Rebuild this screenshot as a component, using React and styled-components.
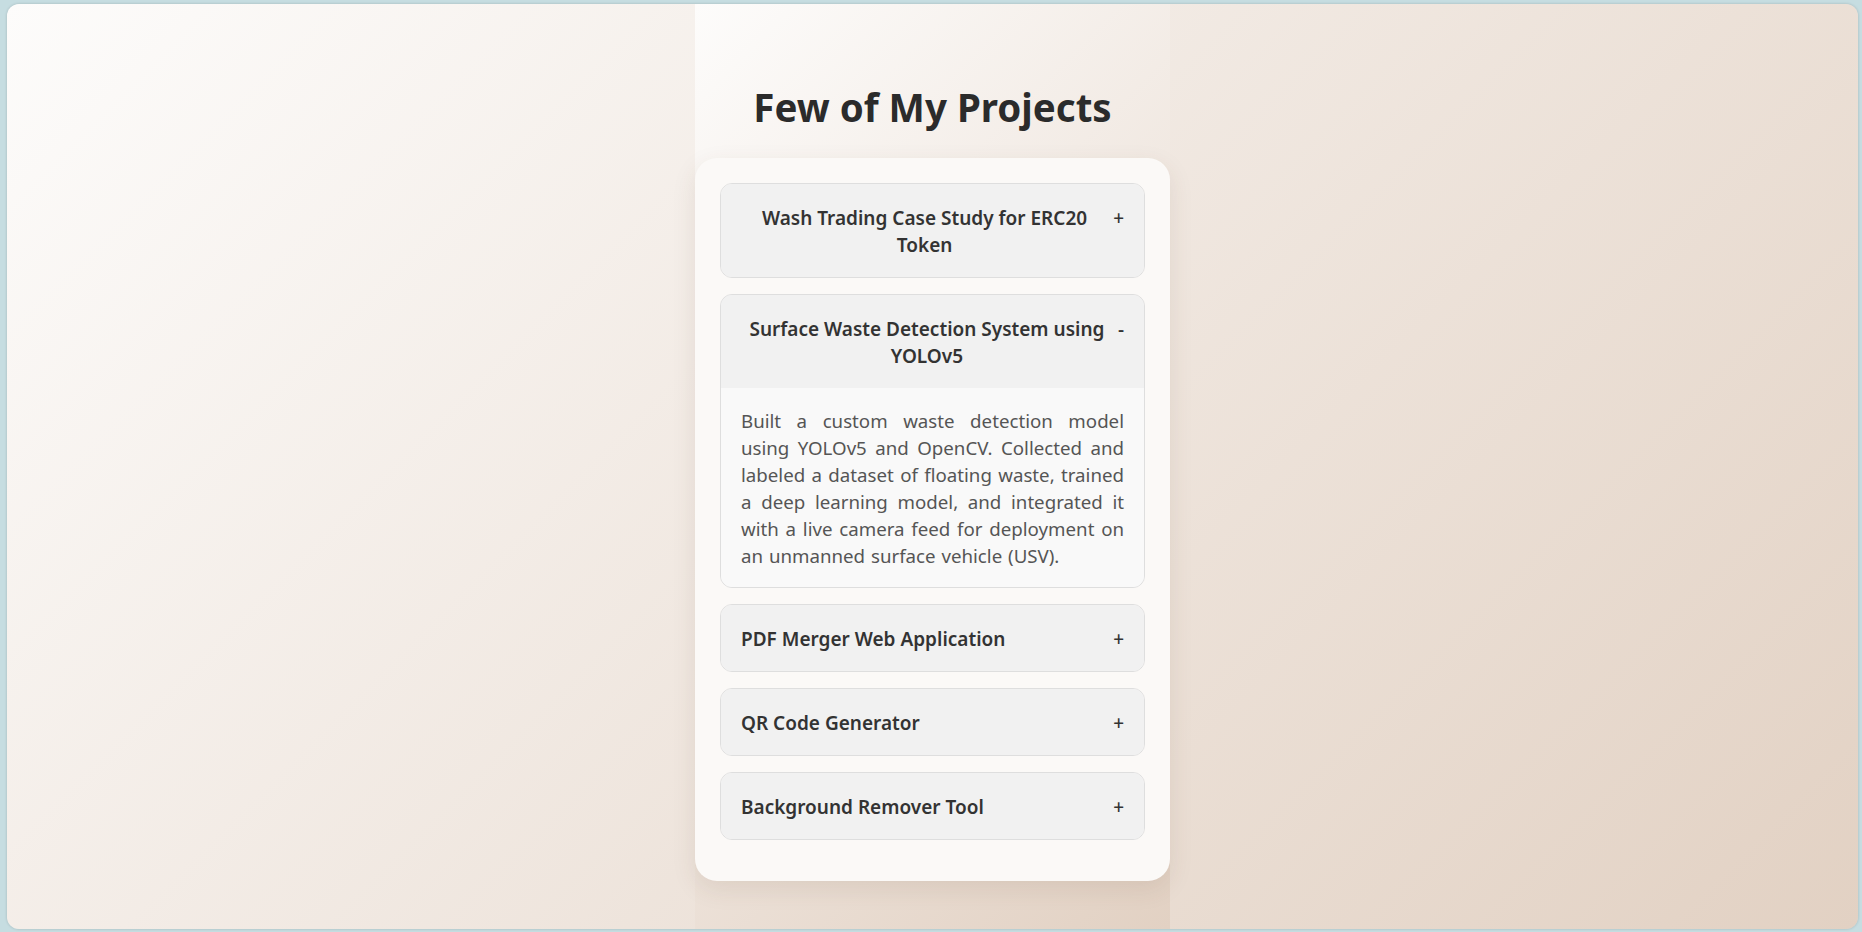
import React, { useState } from 'react';
import styled, { createGlobalStyle } from 'styled-components';

const GlobalStyle = createGlobalStyle`
  html, body {
    margin: 0;
    padding: 0;
    background: #c6dde1;
    font-family: "Noto Sans", "Open Sans", sans-serif;
  }
`;

const Frame = styled.div`
  margin: 4px 4px 3px 7px;
  height: 925px;
  border-radius: 12px;
  overflow: hidden;
  display: flex;
  justify-content: center;
  background: linear-gradient(135deg, #fdfcfb 0%, #e2d1c3 100%);
  box-shadow: 0 0 3px rgba(0, 0, 0, 0.18);
`;

const Section = styled.section`
  width: 475px;
  box-sizing: border-box;
  padding-top: 73px;
  background: linear-gradient(135deg, #fdfcfb 0%, #e2d1c3 100%);
`;

const Heading = styled.h2`
  margin: 0 0 21px;
  text-align: center;
  font-size: 38.5px;
  line-height: 60px;
  font-weight: 700;
  color: #2b2b2b;
`;

const Card = styled.div`
  background: #fbf9f7;
  border-radius: 22px;
  padding: 25px;
  box-shadow: 0 8px 24px rgba(90, 60, 40, 0.1);
`;

const Item = styled.div`
  border: 1px solid #dedede;
  border-radius: 12px;
  overflow: hidden;
  margin-bottom: 16px;
  background: #f1f1f1;
`;

const Header = styled.button`
  width: 100%;
  display: flex;
  justify-content: space-between;
  align-items: flex-start;
  gap: 5px;
  padding: 21px 20px 18px;
  border: none;
  background: #f1f1f1;
  font-family: inherit;
  font-size: 19px;
  line-height: 27px;
  font-weight: 600;
  color: #333;
  text-align: center;
  cursor: pointer;
`;

const Toggle = styled.span`
  font-weight: 500;
  flex-shrink: 0;
`;

const Content = styled.div`
  padding: 20px 20px 18px;
  background: #f9f9f9;
  color: #555;
  font-size: 18.7px;
  line-height: 26.9px;
  word-spacing: 1px;
  text-align: justify;
`;

const projects = [
  {
    title: 'Wash Trading Case Study for ERC20 Token',
    text: 'Analyzed on-chain transaction data of an ERC20 token to detect wash trading patterns and suspicious wallet activity.',
  },
  {
    title: 'Surface Waste Detection System using YOLOv5',
    text: 'Built a custom waste detection model using YOLOv5 and OpenCV. Collected and labeled a dataset of floating waste, trained a deep learning model, and integrated it with a live camera feed for deployment on an unmanned surface vehicle (USV).',
  },
  {
    title: 'PDF Merger Web Application',
    text: 'A simple web app to merge multiple PDF files into one document.',
  },
  {
    title: 'QR Code Generator',
    text: 'Generates QR codes from any text or URL.',
  },
  {
    title: 'Background Remover Tool',
    text: 'Removes image backgrounds automatically.',
  },
];

const App = () => {
  const [open, setOpen] = useState(1);

  return (
    <>
      <GlobalStyle />
      <Frame>
        <Section>
          <Heading>Few of My Projects</Heading>
          <Card>
            {projects.map((p, i) => (
              <Item key={p.title}>
                <Header onClick={() => setOpen(open === i ? -1 : i)}>
                  <span>{p.title}</span>
                  <Toggle>{open === i ? '-' : '+'}</Toggle>
                </Header>
                {open === i && <Content>{p.text}</Content>}
              </Item>
            ))}
          </Card>
        </Section>
      </Frame>
    </>
  );
};

export default App;
